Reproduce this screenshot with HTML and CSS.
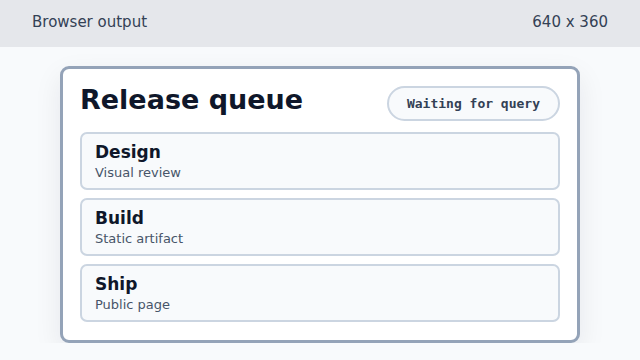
FILE: index.html
```html
<!DOCTYPE html>
<html lang="en">
<head>
    <meta charset="UTF-8">
    <meta name="viewport" content="width=device-width, initial-scale=1.0">
    <title>Release queue</title>
    <link rel="stylesheet" href="styles.css">
</head>
<body>
    <div class="topbar">
        <span>Browser output</span>
        <span>640 x 360</span>
    </div>

    <div class="panel">
        <div class="panel-head">
            <h1>Release queue</h1>
            <span class="status">Waiting for query</span>
        </div>
        <div class="step">
            <h2>Design</h2>
            <p>Visual review</p>
        </div>
        <div class="step">
            <h2>Build</h2>
            <p>Static artifact</p>
        </div>
        <div class="step">
            <h2>Ship</h2>
            <p>Public page</p>
        </div>
    </div>
</body>
</html>
```

FILE: styles.css
```css
body {
    margin: 0;
    font-family: "DejaVu Sans", sans-serif;
    background-color: #f8fafc;
    color: #0f172a;
}
.topbar {
    height: 43px;
    padding: 0 32px 4px;
    display: flex;
    align-items: center;
    justify-content: space-between;
    background-color: #e5e7eb;
    color: #334155;
    font-size: 15px;
}
.panel {
    width: 520px;
    box-sizing: border-box;
    margin: 19px auto 0;
    padding: 17px 17px 18px;
    background-color: #fff;
    border: 3px solid #94a3b8;
    border-radius: 9px;
    box-shadow: 0 10px 28px rgba(15, 23, 42, 0.08);
}
.panel-head {
    display: flex;
    align-items: flex-start;
    justify-content: space-between;
    margin-bottom: 11px;
}
h1 {
    margin: 0;
    font-size: 27px;
    line-height: 28px;
    color: #0f172a;
}
.status {
    padding: 8px 18px;
    border: 2px solid #cbd5e1;
    border-radius: 999px;
    background-color: #f8fafc;
    color: #334155;
    font-family: "DejaVu Sans Mono", monospace;
    font-size: 13px;
    font-weight: bold;
    line-height: 15px;
}
.step {
    padding: 8px 13px 7px;
    margin-bottom: 8px;
    background-color: #f8fafc;
    border: 2px solid #cbd5e1;
    border-radius: 7px;
}
.step:last-child {
    margin-bottom: 0;
}
h2 {
    margin: 0;
    font-size: 17px;
    line-height: 21px;
    color: #0f172a;
}
p {
    margin: 0;
    padding-top: 1px;
    font-size: 13px;
    line-height: 17px;
    color: #475569;
}
```
